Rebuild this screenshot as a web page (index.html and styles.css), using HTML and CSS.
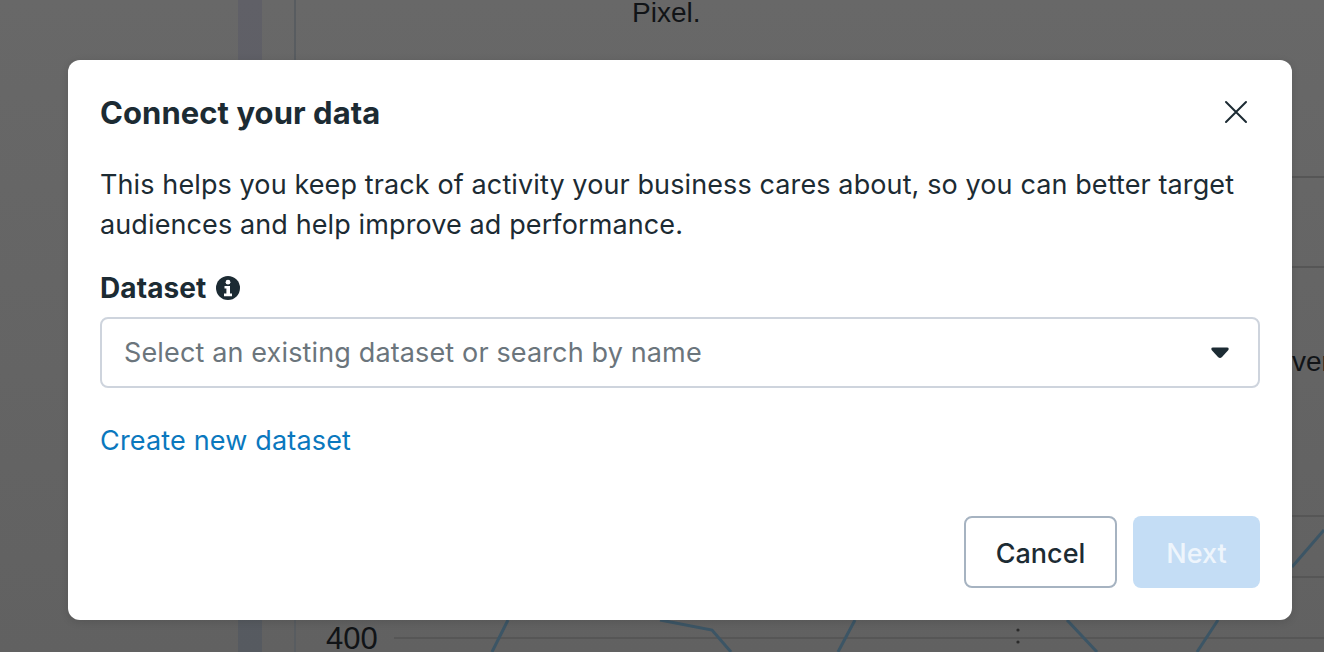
FILE: index.html
```html
<!DOCTYPE html>
<html lang="en">
<head>
<meta charset="utf-8">
<title>Connect your data</title>
<link rel="stylesheet" href="styles.css">
</head>
<body>
<div class="backdrop" aria-hidden="true">
  <div class="sidebar-bar"></div>
  <div class="axis"></div>
  <div class="grid g1"></div>
  <div class="grid g2"></div>
  <div class="grid g3"></div>
  <div class="grid g4"></div>
  <div class="grid g5"></div>
  <svg class="chart" width="1324" height="652" viewBox="0 0 1324 652">
    <path d="M508 620L492 652M660 620L712 630L731 652M855 620L838 652M1067 620L1097 652M1197 652L1218 620M1292 567L1324 530" fill="none" stroke="#3c5565" stroke-width="3"/>
    <circle cx="1018" cy="630" r="1.6" fill="#2b2b2b"/>
    <circle cx="1018" cy="642" r="1.6" fill="#2b2b2b"/>
  </svg>
  <span class="bg-text pixel">Pixel.</span>
  <span class="bg-text ver">ver</span>
  <span class="bg-text tick">400</span>
</div>
<div class="overlay">
  <div class="modal" role="dialog">
    <header class="modal-head">
      <h1 class="modal-title">Connect your data</h1>
      <button class="close" aria-label="Close">
        <svg width="24" height="24" viewBox="0 0 24 24"><path d="M2 2L22 22M22 2L2 22" fill="none" stroke="#1c2b33" stroke-width="2" stroke-linecap="round"/></svg>
      </button>
    </header>
    <p class="desc">This helps you keep track of activity your business cares about, so you can better target audiences and help improve ad performance.</p>
    <div class="label-row">
      <span class="label">Dataset</span>
      <svg class="info" width="24" height="24" viewBox="0 0 24 24"><circle cx="12" cy="12" r="12" fill="#1c2b33"/><circle cx="12" cy="6.2" r="2.4" fill="#fff"/><path d="M8.5 10h5.5v7.6h2v2.6H8v-2.6h2.4v-5H8.5z" fill="#fff"/></svg>
    </div>
    <div class="select">
      <span class="placeholder">Select an existing dataset or search by name</span>
      <svg class="caret" width="18" height="12" viewBox="0 0 18 12"><path d="M2 0.5H16Q18.4 0.5 17.4 3L11 10Q9 12 7 10L0.6 3Q-0.4 0.5 2 0.5Z" fill="#1c2b33"/></svg>
    </div>
    <a class="link" href="#">Create new dataset</a>
    <footer class="actions">
      <button class="btn cancel">Cancel</button>
      <button class="btn next">Next</button>
    </footer>
  </div>
</div>
</body>
</html>
```
FILE: styles.css
```css
* { box-sizing: border-box; }
html, body { margin: 0; height: 100%; overflow: hidden; }
body { font-family: Inter, "Liberation Sans", sans-serif; color: #1c2b33; }

.backdrop {
  position: fixed; inset: 0; overflow: hidden;
  background: linear-gradient(180deg, #686868 0%, #616161 100%);
}
.sidebar-bar { position: absolute; left: 238px; top: 0; width: 24px; height: 652px; background: linear-gradient(180deg, #606067 0%, #565a60 100%); }
.axis { position: absolute; left: 294px; top: 0; width: 2px; height: 652px; background: #585c60; }
.grid { position: absolute; left: 394px; right: 0; height: 2px; background: #565656; }
.g1 { top: 176px; }
.g2 { top: 266px; }
.g3 { top: 515px; }
.g4 { top: 576px; }
.g5 { top: 637px; }
.chart { position: absolute; left: 0; top: 0; }
.bg-text { position: absolute; font-family: "Liberation Sans", sans-serif; font-size: 28px; color: #111417; }
.pixel { left: 632px; top: 0; line-height: 26px; }
.ver { left: 1292px; top: 346px; line-height: 32px; }
.tick { left: 326px; top: 625px; font-size: 31px; line-height: 27px; }

.overlay { position: fixed; inset: 0; display: flex; align-items: flex-start; padding: 60px 0 0 68px; }
.modal {
  width: 1224px; height: 560px; background: #fff; border-radius: 12px;
  padding: 32px; display: flex; flex-direction: column;
  box-shadow: 0 2px 8px rgba(0,0,0,.12);
}
.modal-head { display: flex; justify-content: space-between; align-items: center; height: 42px; }
.modal-title { margin: 0; font-size: 31px; line-height: 42px; font-weight: 700; letter-spacing: .06px; }
.close { border: 0; background: none; padding: 0; margin: 0 12px 2px 0; width: 24px; height: 24px; display: flex; }

.desc { margin: 31px 0 0; font-size: 27px; line-height: 40px; letter-spacing: .11px; }
.label-row { display: flex; align-items: center; gap: 10px; margin-top: 23px; height: 40px; }
.label { font-size: 28px; font-weight: 700; line-height: 40px; letter-spacing: .1px; }
.info { display: block; }

.select {
  margin-top: 9px; height: 71px; border: 2px solid #ced4dd; border-radius: 8px;
  display: flex; align-items: center; justify-content: space-between;
  padding: 0 29px 0 22px;
}
.placeholder { font-size: 27px; letter-spacing: .14px; color: #6b757c; }
.caret { display: block; }

.link { margin-top: 33px; font-size: 27px; line-height: 40px; letter-spacing: .17px; color: #0a78be; text-decoration: none; align-self: flex-start; }

.actions { margin-top: auto; display: flex; justify-content: flex-end; gap: 16px; }
.btn { height: 72px; padding: 3px 0 0; border-radius: 8px; font-family: Inter, "Liberation Sans", sans-serif; font-size: 27px; font-weight: 500; }
.cancel { width: 153px; background: #fff; border: 2px solid #a6b3c1; color: #1c2b33; }
.next { width: 127px; background: #c4ddf5; border: 0; color: #eef5fc; }
```
